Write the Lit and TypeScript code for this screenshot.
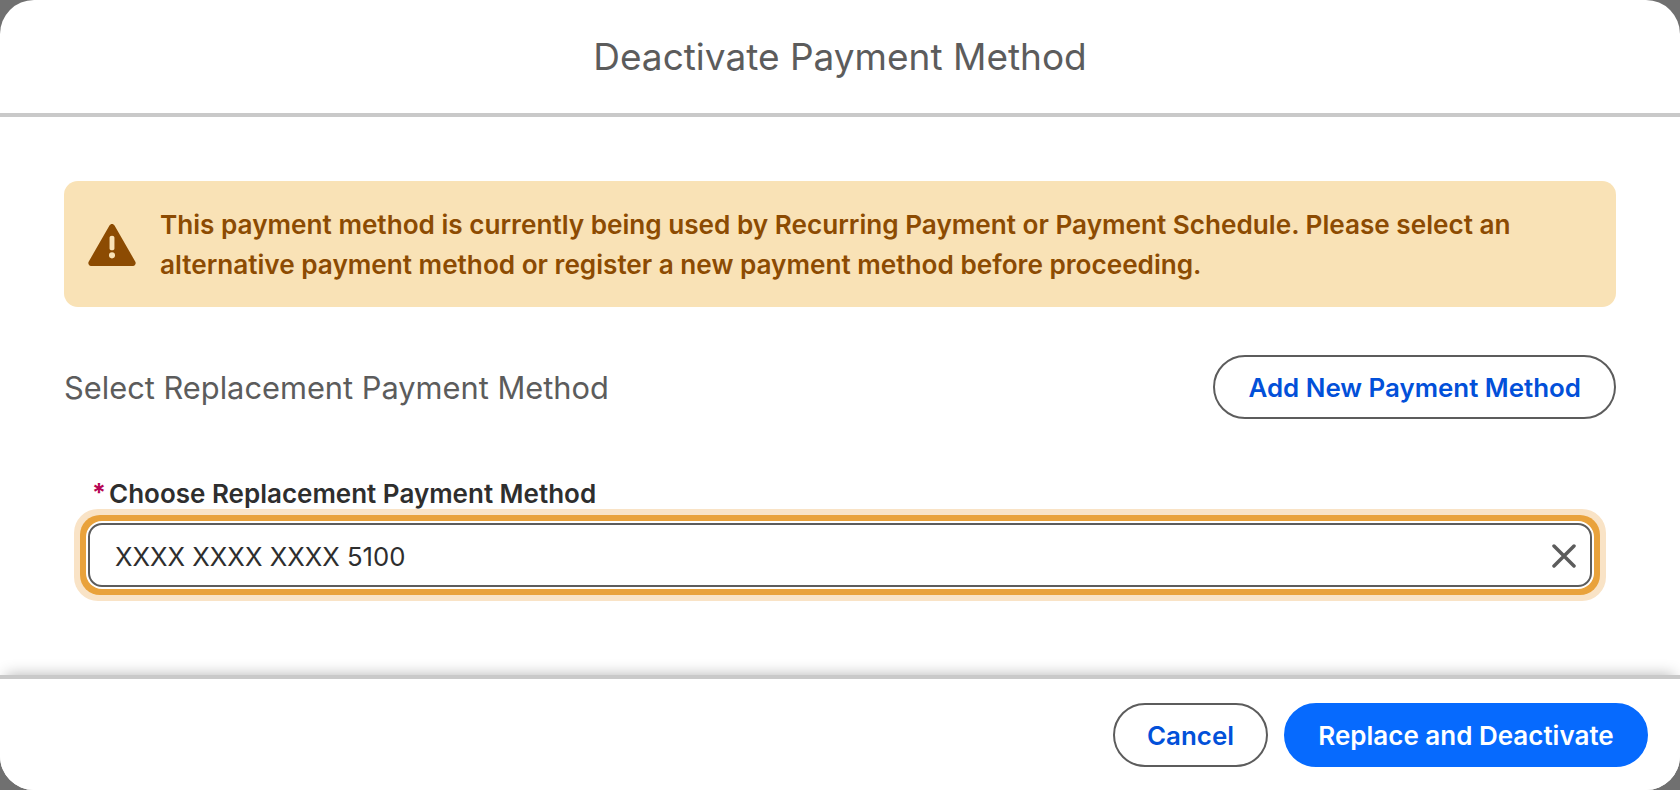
import { LitElement, html, css } from "lit";
import { customElement } from "lit/decorators.js";

@customElement("app-root")
export class AppRoot extends LitElement {
  static styles = css`
    :host { display: block; width: 1680px; height: 790px; background: #707070; font-family: Inter, "Liberation Sans", sans-serif; overflow: hidden; }
    .modal { width: 1680px; height: 790px; background: #fff; border-radius: 34px; display: flex; flex-direction: column; overflow: hidden; box-sizing: border-box; }
    .head { height: 117px; border-bottom: 4px solid #c9c9c9; display: flex; align-items: center; justify-content: center; padding-top: 2px; box-sizing: border-box; flex: none; }
    .head h1 { margin: 0; font-size: 37px; font-weight: 400; color: #5c5c5c; line-height: 1.2; }
    .body { flex: 1; padding: 64px 64px 0; box-sizing: border-box; min-height: 0; }
    .banner { height: 126px; background: #f9e2b6; border-radius: 14px; display: flex; align-items: center; padding: 0 24px; gap: 24px; box-sizing: border-box; color: #8c4b02; }
    .banner svg { width: 48px; height: 42px; flex: none; margin-top: 2px; }
    .banner p { margin: 0; padding-top: 2px; font-size: 26.15px; font-weight: 600; line-height: 40px; }
    .row { display: flex; justify-content: space-between; align-items: center; margin-top: 48px; }
    .row h2 { margin: 0; font-size: 30.8px; font-weight: 400; color: #5c5c5c; }
    .btn { height: 64px; border-radius: 32px; border: 2px solid #5c5c5c; background: #fff; color: #0250d9; font: 600 25.9px Inter, "Liberation Sans", sans-serif; display: inline-flex; align-items: center; justify-content: center; box-sizing: border-box; padding: 0 33px; }
    .btn.primary { background: #066afe; border-color: #066afe; color: #fff; font-size: 26px; }
    .field { margin: 58px 10px 0; }
    .label { display: flex; align-items: center; font-size: 26px; font-weight: 600; color: #2e2e2e; padding-left: 18px; height: 32px; }
    .star { width: 17px; font-size: 25px; font-weight: 700; line-height: 1; color: #b60554; }
    .halo { padding: 6px; background: #f9e3c6; border-radius: 24px; }
    .ring { padding: 6px; background: #e9a23b; border-radius: 20px; }
    .gap { padding: 2px; background: #fff; border-radius: 16px; }
    .input { height: 64px; border: 2px solid #5c5c5c; border-radius: 14px; background: #fff; box-sizing: border-box; display: flex; align-items: center; justify-content: space-between; padding: 2px 14px 0 25px; font-size: 25.7px; color: #2e2e2e; }
    .input svg { width: 24px; height: 24px; }
    .foot { height: 115px; flex: none; border-top: 4px solid #c9c9c9; box-shadow: 0 -6px 14px -6px rgba(0,0,0,.3); display: flex; justify-content: flex-end; align-items: flex-start; padding: 24px 32px 0 0; gap: 16px; box-sizing: border-box; position: relative; background: #fff; }
    .cancel { width: 155px; padding: 1px 0 0; }
    .btn.primary { width: 364px; padding: 1px 0 0; }
  `;

  render() {
    return html`
      <div class="modal">
        <header class="head"><h1>Deactivate Payment Method</h1></header>
        <main class="body">
          <div class="banner">
            <svg viewBox="0 0 49 43"><path fill="#8c4b02" fill-rule="evenodd" d="M24.5 0c1.1 0 2 .6 2.6 1.6l21.3 37c1 1.8-.2 4.2-2.4 4.4H3c-2.2-.2-3.4-2.6-2.4-4.4l21.3-37C22.500.6 23.400 0 24.500 0zM22 14v11c0 1 .8 2 2.500 2s2.500-1 2.500-2V14c0-1-.9-2-2.500-2S22 13 22 14zm2.500 15a3.100 3.100 0 1 0 0 6.200 3.100 3.100 0 0 0 0-6.200z"/></svg>
            <p>This payment method is currently being used by Recurring Payment or Payment Schedule. Please select an alternative payment method or register a new payment method before proceeding.</p>
          </div>
          <div class="row">
            <h2>Select Replacement Payment Method</h2>
            <div class="btn">Add New Payment Method</div>
          </div>
          <div class="field">
            <div class="label"><span class="star">*</span>Choose Replacement Payment Method</div>
            <div class="halo"><div class="ring"><div class="gap">
              <div class="input"><span>XXXX XXXX XXXX 5100</span>
                <svg viewBox="0 0 24 24"><path d="M2 2l20 20M22 2L2 22" stroke="#5c5c5c" stroke-width="3.500" stroke-linecap="round" fill="none"/></svg>
              </div>
            </div></div></div>
          </div>
        </main>
        <footer class="foot">
          <div class="btn cancel">Cancel</div>
          <div class="btn primary">Replace and Deactivate</div>
        </footer>
      </div>
    `;
  }
}
